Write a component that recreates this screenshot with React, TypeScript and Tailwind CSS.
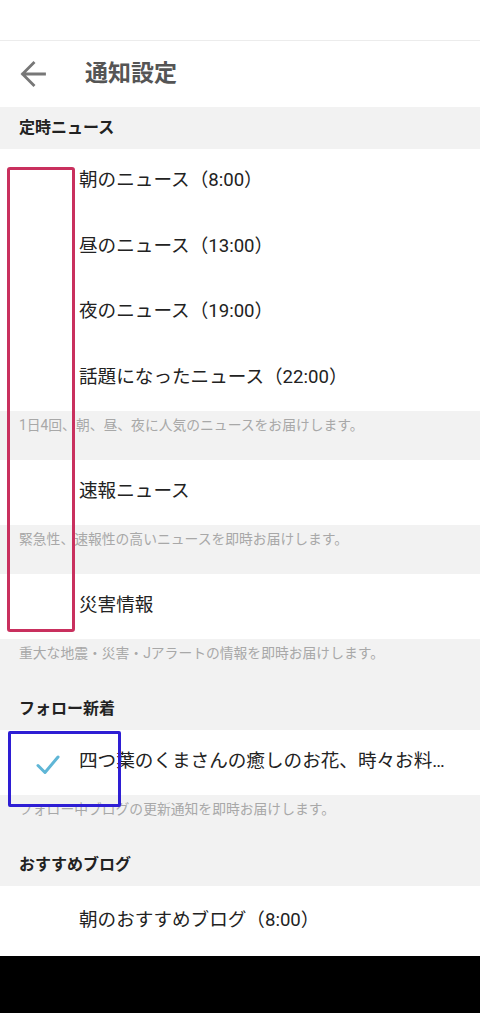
import React from "react";

const font = { fontFamily: "Roboto, 'Noto Sans CJK JP', 'Noto Sans', sans-serif" };

function Row({ text, check, h = "h-[65px]" }: { text: string; check?: boolean; h?: string }) {
  return (
    <div className={`flex items-center bg-white ${h}`}>
      <div className="w-[79px] shrink-0 flex items-center justify-center">
        {check && (
          <svg width="24" height="24" viewBox="0 0 24 24" className="ml-[16px] mt-[4px]">
            <path d="M2 12.5 L9 19.5 L22 4" fill="none" stroke="#5fb6d6" strokeWidth="3" strokeLinecap="round" strokeLinejoin="round" />
          </svg>
        )}
      </div>
      <div className="min-w-0 pr-[26px] truncate text-[18.6px] text-[#222] leading-[24px] -mt-[3px]">{text}</div>
    </div>
  );
}

function Desc({ text }: { text: string }) {
  return (
    <div className="h-[49px] bg-[#f2f2f2] pl-[19px] pt-[5px] text-[13.8px] leading-[18px] text-[#a8a8a8]">{text}</div>
  );
}

function Section({ text }: { text: string }) {
  return (
    <div className="h-[42px] bg-[#f2f2f2] pl-[19px] flex items-center text-[16px] font-bold text-[#222]">{text}</div>
  );
}

export default function App() {
  return (
    <div className="relative w-[480px] h-[1013px] bg-white overflow-hidden" style={font}>
      <div className="h-[41px] bg-white border-b border-[#ececec]" />
      <div className="h-[66px] flex items-center">
        <div className="w-[85px] pl-[20px] flex items-center">
          <svg width="26" height="26" viewBox="0 0 26 26">
            <path d="M24.5 13 H3 M13.5 2 L2.5 13 L13.5 24" fill="none" stroke="#777" strokeWidth="2.8" strokeLinecap="square" />
          </svg>
        </div>
        <div className="text-[23px] font-bold text-[#555] leading-[30px]">通知設定</div>
      </div>
      <Section text="定時ニュース" />
      <Row text="朝のニュース（8:00）" />
      <Row text="昼のニュース（13:00）" h="h-[66px]" />
      <Row text="夜のニュース（19:00）" />
      <Row text="話題になったニュース（22:00）" h="h-[66px]" />
      <Desc text="1日4回、朝、昼、夜に人気のニュースをお届けします。" />
      <Row text="速報ニュース" />
      <Desc text="緊急性、速報性の高いニュースを即時お届けします。" />
      <Row text="災害情報" />
      <Desc text="重大な地震・災害・Jアラートの情報を即時お届けします。" />
      <Section text="フォロー新着" />
      <Row text="四つ葉のくまさんの癒しのお花、時々お料理のブログ" check />
      <Desc text="フォロー中ブログの更新通知を即時お届けします。" />
      <Section text="おすすめブログ" />
      <Row text="朝のおすすめブログ（8:00）" h="h-[70px]" />
      <div className="h-[57px] bg-black" />

      <div className="absolute left-[7px] top-[167px] w-[68px] h-[465px] border-[3px] border-[#c9305e] rounded-[3px]" />
      <div className="absolute left-[8px] top-[731px] w-[113px] h-[76px] border-[3px] border-[#2e1ed4] rounded-[2px]" />
    </div>
  );
}
